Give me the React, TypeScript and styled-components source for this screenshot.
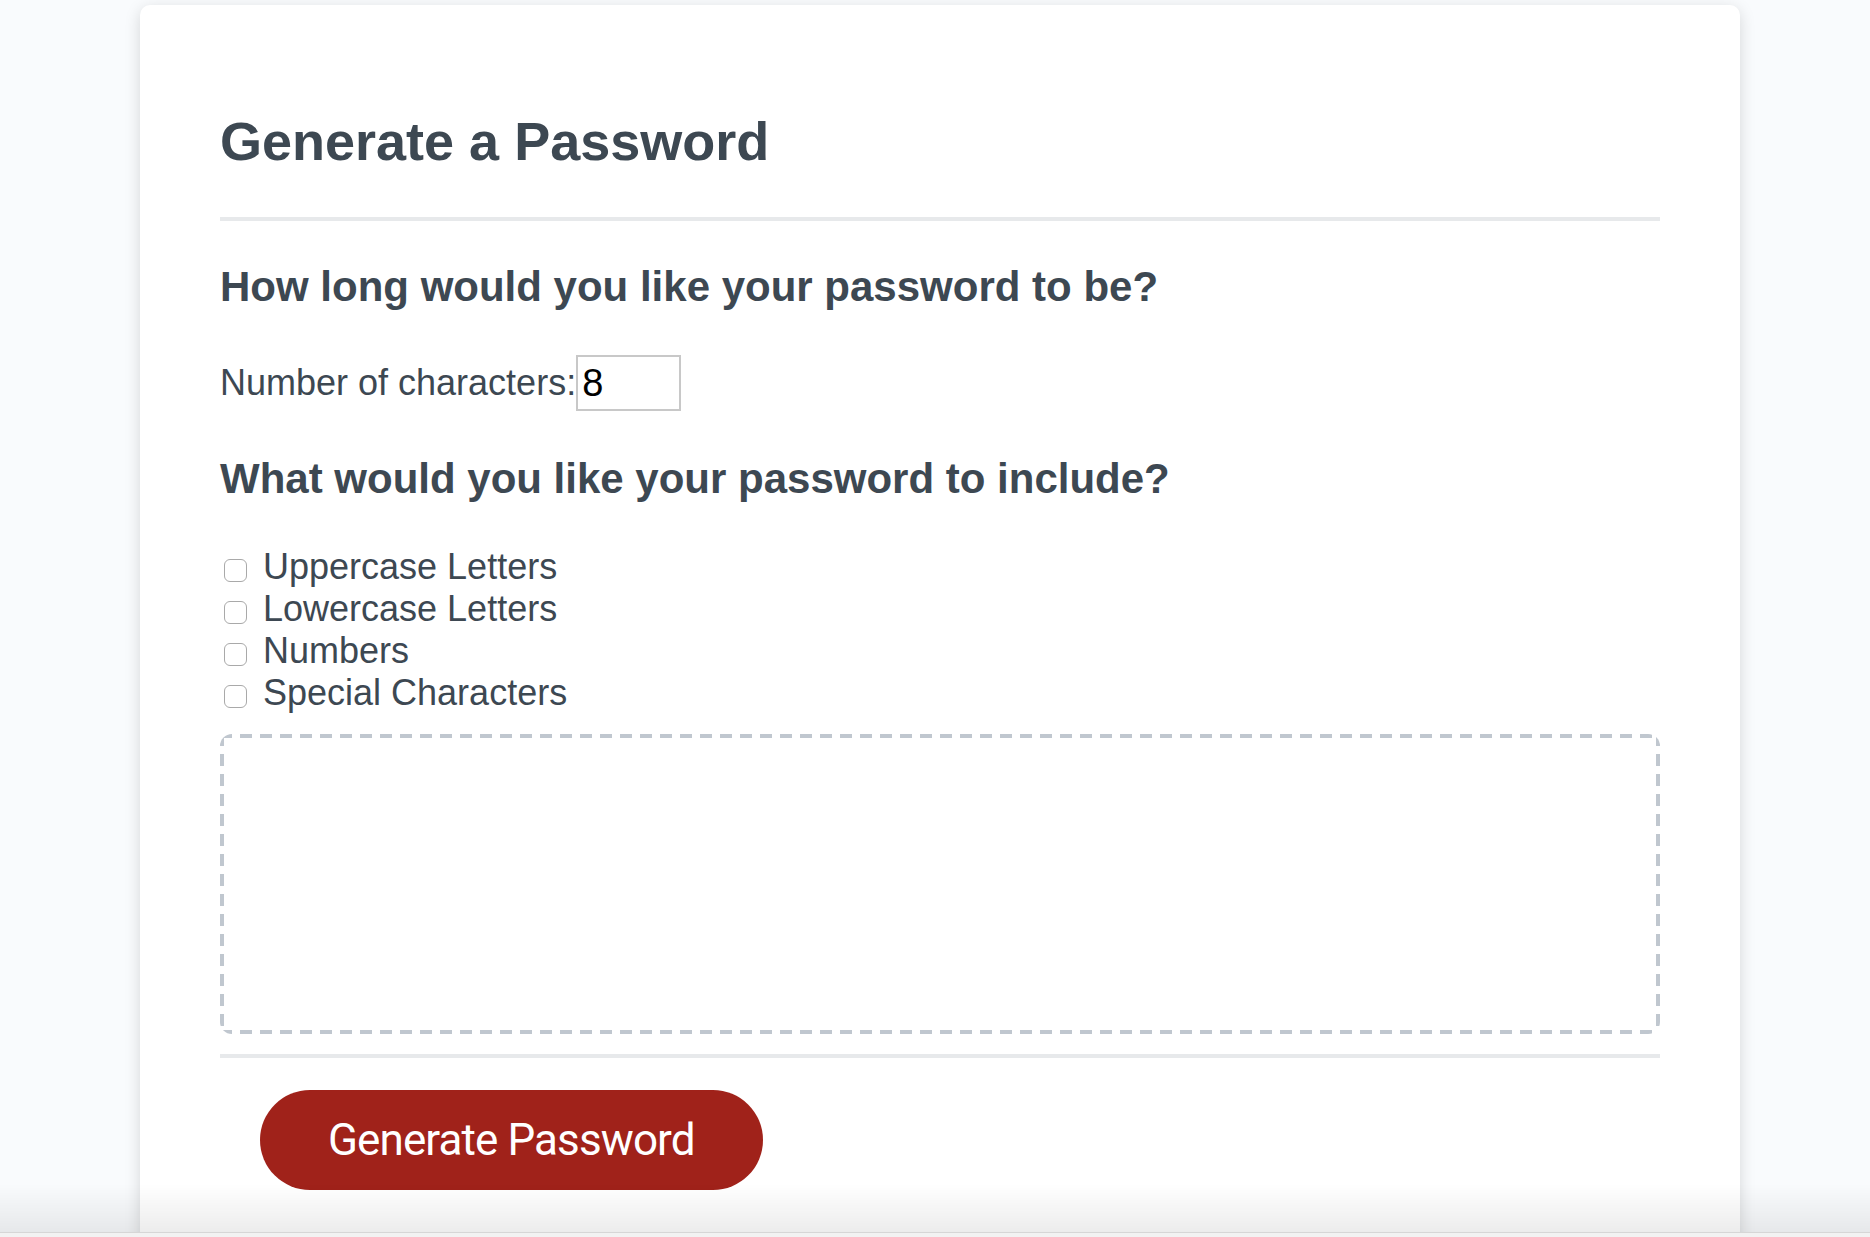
import React from "react";
import styled, { createGlobalStyle } from "styled-components";

const GlobalStyle = createGlobalStyle`
  * { box-sizing: border-box; }
  html, body {
    margin: 0;
    padding: 0;
    overflow: hidden;
    background: #f9fbfd;
    font-family: "Liberation Sans", Arial, Helvetica, sans-serif;
  }
`;

const Page = styled.div`
  padding: 5px 130px 0 140px;
  min-height: 100vh;
`;

const Card = styled.section`
  max-width: 1600px;
  margin: 0 auto;
  background: #ffffff;
  border-radius: 10px;
  box-shadow: rgba(0, 0, 0, 0.15) 0 4px 16px 0;
  color: #3d4852;
  font-size: 36px;
  padding: 60px 80px;
`;

const Divider = styled.div`
  height: 4px;
  width: 100%;
  background: #e7e9eb;
`;

const Title = styled.h2`
  margin: 45px 0 45px;
  font-size: 54px;
  line-height: 62px;
  font-weight: 700;
`;

const Question = styled.h3<{ $top: number; $bottom: number }>`
  margin: ${(p) => `${p.$top}px 0 ${p.$bottom}px`};
  font-size: 42px;
  line-height: 48px;
  font-weight: 700;
`;

const LengthRow = styled.div`
  display: flex;
  align-items: center;
  height: 56px;
`;

const LengthLabel = styled.label`
  font-size: 36px;
  line-height: 56px;
`;

const NumberInput = styled.input`
  width: 105px;
  height: 56px;
  border: 2px solid #c8c8c8;
  border-radius: 0;
  padding: 0 4px;
  font-family: "Liberation Sans", Arial, sans-serif;
  font-size: 38px;
  color: #000;
  background: #fff;
  outline: none;
  appearance: textfield;
  -moz-appearance: textfield;
  &::-webkit-outer-spin-button,
  &::-webkit-inner-spin-button {
    -webkit-appearance: none;
    margin: 0;
  }
`;

const Options = styled.div`
  display: flex;
  flex-direction: column;
`;

const OptionRow = styled.label`
  display: flex;
  align-items: flex-start;
  height: 42px;
  font-size: 36px;
  line-height: 42px;
`;

const Check = styled.input`
  appearance: none;
  -webkit-appearance: none;
  width: 23px;
  height: 23px;
  margin: 13px 16px 0 4px;
  border: 1.5px solid #a9a9a9;
  border-radius: 6px;
  background: #fff;
  flex: none;
`;

const dashH = "repeating-linear-gradient(90deg, #c0c7cf 0 12px, transparent 12px 20px)";
const dashV = "repeating-linear-gradient(180deg, #c0c7cf 0 12px, transparent 12px 20px)";

const Output = styled.textarea`
  display: block;
  width: 100%;
  height: 300px;
  margin: 20px 0;
  padding: 30px 30px 170px;
  border: 4px solid transparent;
  border-radius: 12px;
  background-color: #fff;
  background-image: ${dashH}, ${dashH}, ${dashV}, ${dashV};
  background-position: left top, left bottom, left top, right top;
  background-size: 100% 4px, 100% 4px, 4px 100%, 4px 100%;
  background-repeat: no-repeat;
  background-origin: border-box;
  background-clip: border-box;
  resize: none;
  overflow: hidden;
  font-size: 38px;
  text-align: center;
  outline: none;
`;

const Footer = styled.div`
  display: flex;
`;

const GenerateButton = styled.button`
  margin: 32px 32px 32px 40px;
  height: 100px;
  padding: 0 68px;
  border: none;
  border-radius: 50px;
  background: #a0221a;
  color: #ffffff;
  font-family: Roboto, "Noto Sans", sans-serif;
  font-size: 44px;
  line-height: 100px;
  letter-spacing: -0.9px;
  cursor: pointer;
`;

const BottomShade = styled.div`
  position: fixed;
  left: 0;
  right: 0;
  bottom: 0;
  display: flex;
  flex-direction: column;
  pointer-events: none;
`;

const ShadeFade = styled.div`
  height: 48px;
  background: linear-gradient(to bottom, rgba(0, 0, 0, 0) 0%, rgba(0, 0, 0, 0.075) 100%);
`;

const ShadeBar = styled.div`
  height: 5px;
  border-top: 1px solid #d6d6d6;
  background: #f2f2f2;
`;

const options = ["Uppercase Letters", "Lowercase Letters", "Numbers", "Special Characters"];

export default function App() {
  return (
    <>
      <GlobalStyle />
      <Page>
        <Card>
          <Title>Generate a Password</Title>
          <Divider />
          <Question $top={42} $bottom={44}>How long would you like your password to be?</Question>
          <LengthRow>
            <LengthLabel htmlFor="length">Number of characters:</LengthLabel>
            <NumberInput id="length" type="number" defaultValue={8} />
          </LengthRow>
          <Question $top={44} $bottom={43}>What would you like your password to include?</Question>
          <Options>
            {options.map((o) => (
              <OptionRow key={o}>
                <Check type="checkbox" />
                {o}
              </OptionRow>
            ))}
          </Options>
          <Output readOnly aria-label="Generated Password" />
          <Divider />
          <Footer>
            <GenerateButton>Generate Password</GenerateButton>
          </Footer>
        </Card>
      </Page>
      <BottomShade>
        <ShadeFade />
        <ShadeBar />
      </BottomShade>
    </>
  );
}
